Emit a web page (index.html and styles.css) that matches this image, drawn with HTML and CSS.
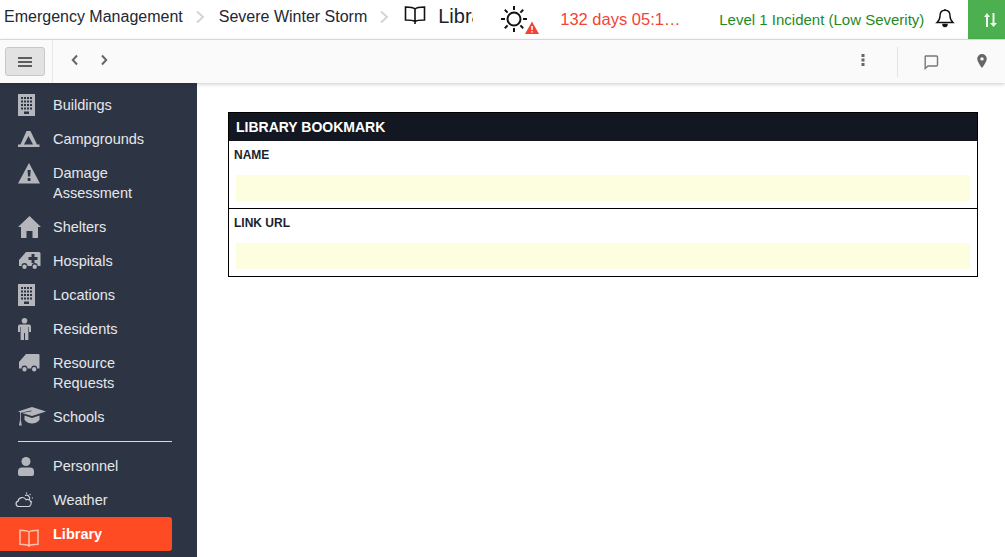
FILE: index.html
```html
<!DOCTYPE html>
<html lang="en">
<head>
<meta charset="utf-8">
<title>Library Bookmark</title>
<link rel="stylesheet" href="styles.css">
</head>
<body>
<header class="topbar">
  <div class="trail">
    <span class="crumb">Emergency Management</span>
    <svg class="chev" width="10" height="14" viewBox="0 0 10 14"><path d="M2 1.500 8 7l-6 5.500" /></svg>
    <span class="crumb">Severe Winter Storm</span>
    <svg class="chev" width="10" height="14" viewBox="0 0 10 14"><path d="M2 1.500 8 7l-6 5.500" /></svg>
    <svg class="book" width="22" height="20" viewBox="0 0 22 20"><path d="M11 4C9.500 2.500 6.500 2 1.500 2v13c5 0 8 .3 9.500 1.700C12.500 15.300 15.500 15 20.500 15V2c-5 0-8 .5-9.500 2Zm0 0v15" /></svg>
    <span class="page-title">Library</span>
  </div>
  <svg class="sun" width="42" height="36" viewBox="0 0 42 36">
    <circle cx="15" cy="17" r="6.500" class="sun-core"/>
    <path class="sun-rays" d="M15 4v4M15 26v4M2 17h4M24 17h4M5.800 7.800l2.800 2.800M21.400 23.400l2.800 2.800M24.200 7.800l-2.800 2.800M8.600 23.400l-2.800 2.800"/>
    <path class="alert-tri" d="M33 19.500 40 32H26Z"/>
    <path class="alert-mark" d="M33 24v4M33 29.200v1.300"/>
  </svg>
  <span class="timer">132 days 05:1…</span>
  <span class="level">Level 1 Incident (Low Severity)</span>
  <svg class="bell" width="20" height="20" viewBox="0 0 20 20"><path d="M10 2.200c-3.300 0-5 2.600-5 5.600 0 3.200-1 5-3 6.700h16c-2-1.700-3-3.500-3-6.700 0-3-1.700-5.600-5-5.600ZM10 1v1.200"/><path d="M8 16.500a2 2 0 0 0 4 0Z" class="bell-clap"/></svg>
  <div class="sync">
    <svg width="13" height="14" viewBox="0 0 13 14"><path d="M3 0 0 4h2v10h2V4h2ZM8.500 0h2v10H13l-3.500 4L6 10h2.500Z"/></svg>
  </div>
</header>
<div class="toolbar">
  <div class="tool-left">
    <button class="menu-btn" type="button" aria-label="Menu">
      <svg width="14" height="10" viewBox="0 0 14 10"><path d="M0 1h14M0 5h14M0 9h14"/></svg>
    </button>
  </div>
  <div class="tool-nav">
    <svg width="8" height="12" viewBox="0 0 8 12"><path d="M6 1.500 1.800 6 6 10.500"/></svg>
    <svg width="8" height="12" viewBox="0 0 8 12"><path d="M2 1.500 6.200 6 2 10.500"/></svg>
  </div>
  <div class="tool-right">
    <svg class="dots" width="4" height="14" viewBox="0 0 4 14"><rect x="0.500" y="1" width="3" height="3"/><rect x="0.500" y="5.500" width="3" height="3"/><rect x="0.500" y="10" width="3" height="3"/></svg>
    <span class="tool-sep"></span>
    <svg class="chat" width="16" height="16" viewBox="0 0 16 16"><path d="M2.500 2h11a1 1 0 0 1 1 1v8a1 1 0 0 1-1 1H5l-2.800 2.500V3a1 1 0 0 1 .3-1Z"/></svg>
    <svg class="pin" width="12" height="16" viewBox="0 0 12 16"><path fill-rule="evenodd" d="M6 1a4.800 4.800 0 0 0-4.800 4.800C1.200 9 6 15 6 15s4.800-6 4.800-9.200A4.800 4.800 0 0 0 6 1Zm0 3.200a1.700 1.700 0 1 1 0 3.400 1.700 1.700 0 0 1 0-3.400Z"/></svg>
  </div>
</div>
<div class="body">
  <nav class="sidebar">
    <a class="nav-item"><span class="nav-icon"><svg width="18" height="22" viewBox="0 0 18 22"><path fill-rule="evenodd" d="M0 0h17v22H0ZM3 3v2h2V3Zm3 0v2h2V3Zm3 0v2h2V3Zm3 0v2h2V3ZM3 6.500v2h2v-2Zm3 0v2h2v-2Zm3 0v2h2v-2Zm3 0v2h2v-2ZM3 10v2h2v-2Zm3 0v2h2v-2Zm3 0v2h2v-2Zm3 0v2h2v-2ZM3 13.500v2h2v-2Zm3 0v2h2v-2Zm3 0v2h2v-2Zm3 0v2h2v-2ZM6 17.500V20h5v-2.500Z"/></svg></span><span>Buildings</span></a>
    <a class="nav-item"><span class="nav-icon"><svg width="22" height="16" viewBox="0 0 22 16"><path fill-rule="evenodd" d="M8.500 0h4L19 13.500h2.500V16H0v-2.500h2.500ZM10.500 5 6 13.500h9Z"/></svg></span><span>Campgrounds</span></a>
    <a class="nav-item"><span class="nav-icon"><svg width="22" height="21" viewBox="0 0 22 21"><path fill-rule="evenodd" d="M11 0 22 20.500H0ZM9.500 7l.5 6.500h2.200L12.700 7ZM9.700 15v3h2.800v-3Z"/></svg></span><span>Damage<br>Assessment</span></a>
    <a class="nav-item"><span class="nav-icon"><svg width="23" height="22" viewBox="0 0 23 22"><path d="M11.500 0 23 11h-3v11h-5.500v-7h-6v7H3V11H0Z"/></svg></span><span>Shelters</span></a>
    <a class="nav-item"><span class="nav-icon"><svg width="23" height="20" viewBox="0 0 23 20"><path fill-rule="evenodd" d="M8 1h13a1.500 1.500 0 0 1 1.500 1.500V15h-2.800a3 3 0 0 0-6 0H9.500a3 3 0 0 0-6 0H1V9Zm5.500 2v3h-3v3h3v3h3V9h3V6h-3V3ZM6.500 13.500a2.200 2.200 0 1 1 0 4.400 2.200 2.200 0 0 1 0-4.400Zm10.200 0a2.200 2.200 0 1 1 0 4.400 2.200 2.200 0 0 1 0-4.400Z"/></svg></span><span>Hospitals</span></a>
    <a class="nav-item"><span class="nav-icon"><svg width="18" height="22" viewBox="0 0 18 22"><path fill-rule="evenodd" d="M0 0h17v22H0ZM3 3v2h2V3Zm3 0v2h2V3Zm3 0v2h2V3Zm3 0v2h2V3ZM3 6.500v2h2v-2Zm3 0v2h2v-2Zm3 0v2h2v-2Zm3 0v2h2v-2ZM3 10v2h2v-2Zm3 0v2h2v-2Zm3 0v2h2v-2Zm3 0v2h2v-2ZM3 13.500v2h2v-2Zm3 0v2h2v-2Zm3 0v2h2v-2Zm3 0v2h2v-2ZM6 17.500V20h5v-2.500Z"/></svg></span><span>Locations</span></a>
    <a class="nav-item"><span class="nav-icon"><svg width="13" height="22" viewBox="0 0 13 22"><circle cx="6.500" cy="2.800" r="2.800"/><path d="M2 6.500h9a2 2 0 0 1 2 2V14h-2V9h-.6v13H7V15H6v7H2.600V9H2v5H0V8.500a2 2 0 0 1 2-2Z"/></svg></span><span>Residents</span></a>
    <a class="nav-item"><span class="nav-icon"><svg width="22" height="18" viewBox="0 0 22 18"><path fill-rule="evenodd" d="M8 0h12.500a1 1 0 0 1 1 1v13.500h-2.300a3 3 0 0 0-6 0H9.500a3 3 0 0 0-6 0H1V8Zm-1.500 13a2.200 2.200 0 1 1 0 4.400 2.200 2.200 0 0 1 0-4.400Zm9.700 0a2.200 2.200 0 1 1 0 4.400 2.200 2.200 0 0 1 0-4.400Z"/></svg></span><span>Resource<br>Requests</span></a>
    <a class="nav-item"><span class="nav-icon"><svg width="28" height="20" viewBox="0 0 28 20"><path d="M14 0 28 4.500 14 9 4 6l9.500-1.800-.2-.8L2.800 5.800V13l1 5.500H1L2 13V5.300L0 4.500Z"/><path d="M6.500 8.500 14 11l7.500-2.500V13c-2 2.500-5 3.500-7.500 3.500s-5.500-1-7.500-3.500Z"/></svg></span><span>Schools</span></a>
    <div class="nav-rule"></div>
    <a class="nav-item"><span class="nav-icon"><svg width="16" height="19" viewBox="0 0 16 19"><circle cx="8" cy="4.500" r="4.500"/><path d="M4 10.500h8a4 4 0 0 1 4 4V17a2 2 0 0 1-2 2H2a2 2 0 0 1-2-2v-2.500a4 4 0 0 1 4-4Z"/></svg></span><span>Personnel</span></a>
    <a class="nav-item"><span class="nav-icon nav-icon-weather"><svg width="20" height="16" viewBox="0 0 20 16"><path class="line" d="M3.500 14.500a2.700 2.700 0 0 1-.4-5.300 4.300 4.300 0 0 1 8-1.500 3.400 3.400 0 0 1 2.700 6.800ZM10 3.500a3.500 3.500 0 0 1 4.300 5M11.500 0.500v1.200M15.500 2l-.8 1M18 6h-1.200M17 10l-1-.5"/></svg></span><span>Weather</span></a>
    <a class="nav-item nav-item-active"><span class="nav-icon nav-icon-low"><svg width="20" height="19" viewBox="0 0 20 19"><path class="line" d="M10 3C8.500 1.800 6 1.300 1 1.300v14c5 0 7.500.4 9 1.700 1.500-1.300 4-1.700 9-1.700v-14c-5 0-7.500.5-9 1.700Zm0 0v15"/></svg></span><span>Library</span></a>
  </nav>
  <main class="content">
    <section class="card">
      <h2 class="card-title">LIBRARY BOOKMARK</h2>
      <div class="field">
        <label class="field-label">NAME</label>
        <div class="field-input"></div>
      </div>
      <div class="field">
        <label class="field-label">LINK URL</label>
        <div class="field-input"></div>
      </div>
    </section>
  </main>
</div>
</body>
</html>
```
FILE: styles.css
```css
* { box-sizing: border-box; }
html, body { height: 100%; }
body {
  margin: 0;
  display: flex;
  flex-direction: column;
  height: 557px;
  overflow: hidden;
  font-family: "Liberation Sans", Arial, sans-serif;
  color: #1a1f2e;
  background: #fff;
}
svg { display: block; flex: none; }

.topbar {
  height: 40px;
  flex: none;
  display: flex;
  align-items: center;
  border-bottom: 1px solid #e2e2e2;
  background: #fff;
  padding-left: 4px;
}
.trail { display: flex; align-items: center; padding-bottom: 6px; }
.crumb { font-size: 16px; white-space: nowrap; color: #222735; }
.chev { margin: 0 14px 0 12px; }
.chev path { fill: none; stroke: #d4d4d4; stroke-width: 2; }
.book { margin: 0 0 3px 1px; }
.book path { fill: none; stroke: #111; stroke-width: 1.600; }
.page-title { width: 35px; margin-left: 12px; overflow: hidden; font-size: 20px; white-space: nowrap; color: #1a1f2e; }
.sun { margin-left: 26px; }
.sun-core { fill: none; stroke: #111; stroke-width: 2; }
.sun-rays { fill: none; stroke: #111; stroke-width: 2; }
.alert-tri { fill: #f44336; }
.alert-mark { fill: none; stroke: #fff; stroke-width: 1.600; }
.timer { margin-left: 19px; font-size: 16.500px; color: #f44336; white-space: nowrap; width: 122px; }
.level { margin-left: 37px; font-size: 15px; color: #1f8a1f; white-space: nowrap; }
.bell { margin: 0 0 3px 11px; }
.bell path { fill: none; stroke: #111; stroke-width: 1.400; }
.bell .bell-clap { fill: #111; }
.sync {
  margin-left: auto;
  width: 37px;
  height: 39px;
  background: #4caf50;
  display: flex;
  align-items: center;
  justify-content: center;
  padding-left: 7px;
}
.sync path { fill: #eef7ee; }

.toolbar {
  height: 43px;
  flex: none;
  display: flex;
  align-items: center;
  background: #fafafa;
  box-shadow: 0 1px 4px rgba(0, 0, 0, .22);
  position: relative;
  z-index: 2;
}
.tool-left {
  width: 53px;
  height: 100%;
  flex: none;
  padding-left: 5px;
  padding-top: 7px;
  border-right: 1px solid #e8e8e8;
}
.menu-btn {
  width: 40px;
  height: 29px;
  padding: 0;
  display: flex;
  align-items: center;
  justify-content: center;
  background: #e2e2e2;
  border: 1px solid #c8c8c8;
  border-radius: 3px;
}
.menu-btn path { fill: none; stroke: #333; stroke-width: 1.600; }
.tool-nav { display: flex; align-items: center; gap: 21px; margin-left: 18px; margin-top: -3px; }
.tool-nav path { fill: none; stroke: #666; stroke-width: 2; }
.tool-right { margin-left: auto; display: flex; align-items: center; height: 100%; }
.dots { margin-top: -4px; }
.dots rect { fill: #666; }
.tool-sep { width: 1px; height: 30px; background: #e4e4e4; margin: 0 25px 0 32px; }
.chat { margin-top: 1px; }
.chat path { fill: none; stroke: #777; stroke-width: 1.400; }
.pin { margin: -1px 17px 0 37px; }
.pin path { fill: #666; }

.body { flex: 1; min-height: 0; display: flex; }
.sidebar {
  width: 197px;
  flex: none;
  background: #2d3545;
  padding-top: 5px;
  overflow: hidden;
}
.nav-item {
  display: flex;
  width: 172px;
  padding: 7px 0;
  font-size: 14.500px;
  line-height: 20px;
  color: #e6e7ea;
}
.nav-icon {
  width: 53px;
  height: 20px;
  flex: none;
  padding-left: 18px;
  display: flex;
  align-items: center;
}
.nav-icon path, .nav-icon circle { fill: #b4b6bc; }
.nav-icon .line { fill: none; stroke: #d2d3d7; stroke-width: 1.200; }
.nav-icon-weather { padding-left: 15px; }
.nav-icon-low { padding-left: 19px; padding-top: 9px; }
.nav-rule { width: 154px; height: 1px; margin: 7px 0 7px 18px; background: #d8d9dc; }
.nav-item-active {
  background: #ff4b24;
  color: #fff;
  font-weight: 700;
  border-radius: 0 3px 3px 0;
}
.nav-item-active .line { stroke: #ffc0ae; stroke-width: 1.500; }

.content { flex: 1; min-width: 0; padding: 29px 27px 0 31px; background: #fff; }
.card { border: 1px solid #000; }
.card-title {
  margin: 0;
  height: 28px;
  padding: 0 7px;
  font-size: 14px;
  line-height: 28px;
  font-weight: 700;
  color: #fff;
  background: #131722;
}
.field { height: 67px; padding: 7px 7px 0 5px; }
.field + .field { border-top: 1px solid #000; height: 68px; }
.field-label { display: block; font-size: 12px; line-height: 14px; font-weight: 700; color: #1a1f2e; }
.field-input { height: 26px; margin: 13px 0 0 2px; background: #fdfde0; }
```
